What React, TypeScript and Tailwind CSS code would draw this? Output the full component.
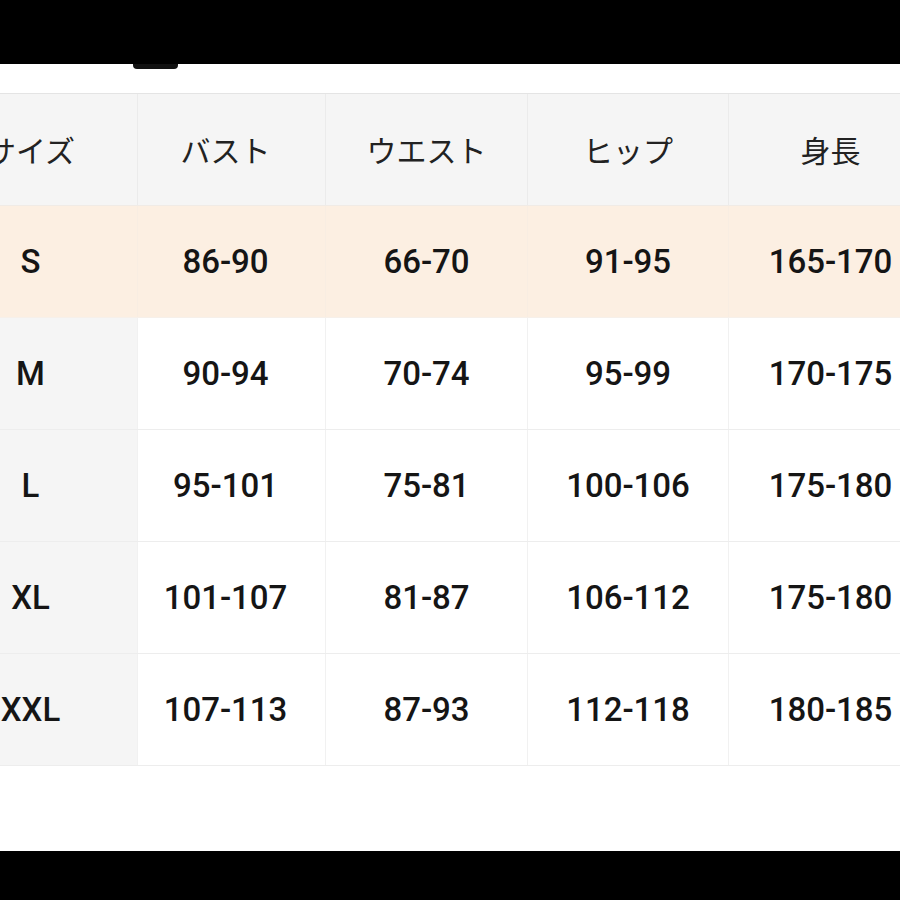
import React from "react";

const headers = ["サイズ", "バスト", "ウエスト", "ヒップ", "身長"];

const rows: string[][] = [
  ["S", "86-90", "66-70", "91-95", "165-170"],
  ["M", "90-94", "70-74", "95-99", "170-175"],
  ["L", "95-101", "75-81", "100-106", "175-180"],
  ["XL", "101-107", "81-87", "106-112", "175-180"],
  ["XXL", "107-113", "87-93", "112-118", "180-185"],
];

// column widths; first column starts off-screen to the left
const widths = ["w-[213px]", "w-[188px] pr-[12px]", "w-[202px]", "w-[201px]", "w-[204px]"];

const jp = { fontFamily: '"Noto Sans CJK JP", "Noto Sans", sans-serif' };
const num = { fontFamily: 'Roboto, "Liberation Sans", sans-serif' };

export default function App() {
  return (
    <div className="w-[900px] h-[900px] bg-white flex flex-col overflow-hidden">
      {/* Top bar */}
      <div className="h-[64px] bg-black shrink-0" />
      <div className="ml-[133px] w-[45px] h-[5px] bg-[#111] rounded-b-[4px] shrink-0" />

      {/* Table */}
      <div className="mt-[24px] ml-[-76px] flex flex-col border-t border-[#e4e4e4] shrink-0">
        {/* Header */}
        <div className="flex h-[112px] bg-[#f5f5f5] border-b border-[#f0ebe6]">
          {headers.map((h, i) => (
            <div
              key={h}
              className={`${widths[i]} shrink-0 flex items-center justify-center text-[30px] text-[#222] ${
                i > 0 ? "border-l border-[#ebebeb]" : ""
              }`}
              style={jp}
            >
              {h}
            </div>
          ))}
        </div>

        {/* Rows */}
        {rows.map((row, r) => (
          <div
            key={row[0]}
            className={`flex h-[112px] border-b ${
              r === 0 ? "bg-[#fcefe2] border-[#f6f0ea]" : "bg-white border-[#ededed]"
            } ${r === rows.length - 1 ? "border-[#e2e2e2]" : ""}`}
          >
            {row.map((cell, i) => (
              <div
                key={i}
                className={`${widths[i]} shrink-0 flex items-center justify-center text-[33px] font-medium text-[#151515] ${
                  i > 0 ? (r === 0 ? "border-l border-[#f8ede2]" : "border-l border-[#f1f1f1]") : ""
                } ${i === 0 && r > 0 ? "bg-[#f5f5f5]" : ""}`}
                style={num}
              >
                {cell}
              </div>
            ))}
          </div>
        ))}
      </div>

      <div className="flex-1" />

      {/* Bottom bar */}
      <div className="h-[49px] bg-black shrink-0" />
    </div>
  );
}
